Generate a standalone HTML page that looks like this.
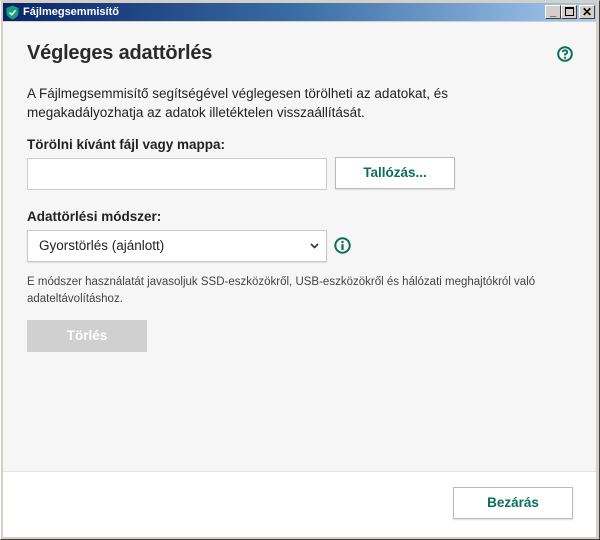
<!DOCTYPE html>
<html><head><meta charset="utf-8"><style>
*{margin:0;padding:0;box-sizing:border-box}
body{width:600px;height:540px;position:relative;overflow:hidden;background:#d4d0c8;font-family:"Liberation Sans",sans-serif;color:#222}
.a{position:absolute}
#frame{left:0;top:0;width:600px;height:540px;border-top:1px solid #d4d0c8;border-left:1px solid #fff;border-right:1px solid #404040;border-bottom:1px solid #404040}
#title{left:3px;top:3px;width:593px;height:18px;background:linear-gradient(to right,#0a246a 0%,#3a6ea5 50%,#a6caf0 100%)}
#title span{position:absolute;left:20px;top:3px;color:#fff;font-weight:bold;font-size:11px}
.wb{top:5px;width:16px;height:14px;background:#d4d0c8;border:1px solid;border-color:#fff #404040 #404040 #fff;font-size:11px;font-weight:bold;text-align:center;line-height:12px;color:#000}
#main{left:3px;top:22px;width:593px;height:449px;background:#f6f6f6}
#foot{left:3px;top:471px;width:593px;height:66px;background:#fff;border-top:1px solid #e4e4e4}
.t{font-size:13.5px;color:#222}
.btn{background:#fff;border:1px solid #bbb;box-shadow:0 1px 1px #ddd;color:#0b6f5c;font-size:13.5px;text-align:center;font-weight:bold}
</style></head><body>
<div class="a" id="frame"></div>
<div class="a" id="title">
<svg class="a" style="left:3px;top:2px" width="13" height="15" viewBox="0 0 13 15"><path d="M6.5 0.5 L12.5 3 L12.5 8 Q12.5 12 6.5 14.5 Q0.5 12 0.5 8 L0.5 3 Z" fill="#13a07a"/><path d="M3.5 7.5 L5.8 9.8 L9.5 5.3" stroke="#fff" stroke-width="1.5" fill="none"/></svg>
<span>Fájlmegsemmisítő</span></div>
<div class="a wb" style="left:545px">_</div>
<div class="a wb" style="left:561px"><div style="width:9px;height:9px;border:1px solid #000;border-top-width:2px;margin:1px auto 0"></div></div>
<div class="a wb" style="left:579px;font-size:12px">✕</div>
<div class="a" id="main"></div>
<div class="a" id="foot"></div>
<div class="a" style="left:27px;top:42px;font-size:20px;font-weight:bold;color:#2a2a2a;letter-spacing:-0.2px">Végleges adattörlés</div>
<svg class="a" style="left:557px;top:46px" width="16" height="16" viewBox="0 0 16 16"><circle cx="8" cy="8" r="6.8" fill="none" stroke="#0b6f5c" stroke-width="2"/><path d="M5.8 6.3 Q5.8 4.3 8 4.3 Q10.2 4.3 10.2 6.2 Q10.2 7.5 8 8.3 L8 9.5" fill="none" stroke="#0b6f5c" stroke-width="1.8"/><circle cx="8" cy="11.7" r="1.1" fill="#0b6f5c"/></svg>
<div class="a t" style="left:27px;top:84px;line-height:19px;width:450px">A Fájlmegsemmisítő segítségével véglegesen törölheti az adatokat, és megakadályozhatja az adatok illetéktelen visszaállítását.</div>
<div class="a t" style="left:27px;top:137px;font-weight:bold">Törölni kívánt fájl vagy mappa:</div>
<div class="a" style="left:27px;top:158px;width:300px;height:32px;background:#fff;border:1px solid #ccc"></div>
<div class="a btn" style="left:335px;top:157px;width:120px;height:32px;line-height:30px">Tallózás...</div>
<div class="a t" style="left:27px;top:209px;font-weight:bold">Adattörlési módszer:</div>
<div class="a" style="left:27px;top:230px;width:300px;height:32px;background:#fff;border:1px solid #c8c8c8;box-shadow:0 1px 1px #ddd"><span class="a t" style="left:11px;top:7px">Gyorstörlés (ajánlott)</span>
<svg class="a" style="left:282px;top:12px" width="9" height="6" viewBox="0 0 9 6"><path d="M1 1 L4.5 4.5 L8 1" stroke="#333" stroke-width="1.6" fill="none"/></svg></div>
<svg class="a" style="left:334px;top:237px" width="17" height="17" viewBox="0 0 17 17"><circle cx="8.5" cy="8.5" r="7.2" fill="none" stroke="#0b6f5c" stroke-width="2"/><circle cx="8.5" cy="5" r="1.2" fill="#0b6f5c"/><rect x="7.4" y="7.2" width="2.2" height="5.8" fill="#0b6f5c"/></svg>
<div class="a" style="left:27px;top:274px;font-size:11.5px;color:#444;line-height:17px;width:540px">E módszer használatát javasoljuk SSD-eszközökről, USB-eszközökről és hálózati meghajtókról való adateltávolításhoz.</div>
<div class="a" style="left:27px;top:320px;width:120px;height:32px;background:#d0d0d0;color:#fff;font-weight:bold;font-size:13.5px;text-align:center;line-height:32px">Törlés</div>
<div class="a btn" style="left:453px;top:487px;width:120px;height:32px;line-height:30px">Bezárás</div>
</body></html>
